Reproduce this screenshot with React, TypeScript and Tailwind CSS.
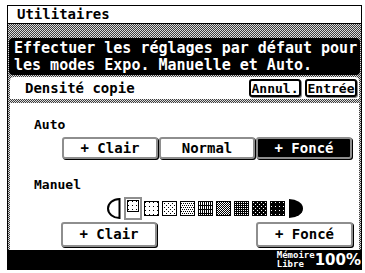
import React from "react";

// dithered gray used by the copier panel frame
const dither =
  "bg-[image:repeating-conic-gradient(#3c3c3c_0%_25%,#dcdcdc_0%_50%)] bg-[length:2px_2px]";

// --- density pattern tiles (4x4) ---
const tiles: { bg: string; fg: string; cells: [number, number][] }[] = [
  { bg: "#fff", fg: "#000", cells: [[1, 1]] },
  { bg: "#fff", fg: "#000", cells: [[0, 0], [2, 2]] },
  { bg: "#fff", fg: "#000", cells: [[0, 0], [2, 0], [1, 2], [3, 2]] },
  { bg: "#fff", fg: "#000", cells: [[0, 0], [0, 1], [0, 2], [0, 3], [2, 0], [2, 1], [2, 2], [2, 3], [1, 0], [3, 0]] },
  { bg: "#fff", fg: "#000", cells: [[0, 0], [2, 0], [1, 1], [3, 1], [0, 2], [2, 2], [1, 3], [3, 3]] },
  { bg: "#000", fg: "#fff", cells: [[1, 1], [3, 1], [1, 3], [3, 3]] },
  { bg: "#000", fg: "#fff", cells: [[1, 1], [3, 3]] },
  { bg: "#000", fg: "#fff", cells: [[1, 1]] },
];

const Swatch = ({ i, size = 15 }: { i: number; size?: number }) => {
  const t = tiles[i];
  const id = `pat-${i}-${size}`;
  return (
    <svg width={size} height={size} shapeRendering="crispEdges" className="block">
      <defs>
        <pattern id={id} width="4" height="4" patternUnits="userSpaceOnUse">
          <rect width="4" height="4" fill={t.bg} />
          {t.cells.map(([x, y], k) => (
            <rect key={k} x={x} y={y} width="1" height="1" fill={t.fg} />
          ))}
        </pattern>
      </defs>
      <rect x="0.5" y="0.5" width={size - 1} height={size - 1} fill={`url(#${id})`} stroke="#000" />
    </svg>
  );
};

const AutoBtn = ({ label, dark = false }: { label: string; dark?: boolean }) => (
  <div
    className={`w-[96px] h-[22px] rounded-[3px] border-2 border-[#8e8e8e] shadow-[1px_1px_0_#000] flex items-center justify-center text-[14px] font-bold ${
      dark ? "bg-black text-white" : "bg-white text-black"
    }`}
  >
    {label}
  </div>
);

const HeadBtn = ({ label }: { label: string }) => (
  <div className="h-[18px] w-[52px] rounded-[3px] border-2 border-black bg-white shadow-[1px_1px_0_#888] flex items-center justify-center text-[13px] leading-[13px] font-bold">
    {label}
  </div>
);

export default function App() {
  return (
    <div className="w-[365px] h-[273px] bg-white pl-[7px] pt-[5px] font-['DejaVu_Sans_Mono','Liberation_Mono',monospace] text-black">
      <div className={`w-[355px] h-[265px] border border-black flex flex-col overflow-hidden ${dither}`}>
        {/* title */}
        <div className="h-[18px] shrink-0 bg-white border-b border-black pl-[9px] text-[14px] leading-[17px] font-bold">
          Utilitaires
        </div>

        {/* message */}
        <div className="mt-[14px] mx-px h-[37px] shrink-0 rounded-[4px] bg-black text-white text-[15px] leading-[17px] font-bold pl-[5px] pt-[2px] whitespace-nowrap">
          Effectuer les réglages par défaut pour
          <br />
          les modes Expo. Manuelle et Auto.
        </div>

        {/* density header */}
        <div className="mt-[2px] mx-[2px] h-[22px] shrink-0 rounded-t-[4px] bg-white flex items-center pl-[15px] pr-[2px] text-[14px] font-bold">
          <span>Densité copie</span>
          <div className="ml-auto flex gap-[4px]">
            <HeadBtn label="Annul." />
            <HeadBtn label="Entrée" />
          </div>
        </div>

        {/* content */}
        <div className="mt-[4px] mx-[2px] flex-1 bg-white flex flex-col">
          <div className="pl-[24px] pt-[15px] text-[13px] leading-[14px] font-bold">Auto</div>
          <div className="mt-[5px] ml-[52px] flex gap-px">
            <AutoBtn label="+ Clair" />
            <AutoBtn label="Normal" />
            <AutoBtn label="+ Foncé" dark />
          </div>

          <div className="mt-[19px] pl-[24px] text-[13px] leading-[14px] font-bold">Manuel</div>

          {/* density scale */}
          <div className="mt-[5px] ml-[97px] h-[23px] flex items-center">
            <svg width="14" height="21" className="block">
              <path d="M12.5 1 A 11.5 9.5 0 0 0 12.5 20 Z" fill="#fff" stroke="#000" strokeWidth="2" />
            </svg>
            <div className="ml-[3px] w-[18px] h-[23px] border-2 border-[#8e8e8e] bg-white p-px">
              <Swatch i={0} size={12} />
            </div>
            <div className="ml-[2px] flex gap-[3px]">
              {[0, 1, 2, 3, 4, 5, 6, 7].map((i) => (
                <Swatch key={i} i={i} />
              ))}
            </div>
            <svg width="16" height="21" className="block ml-[3px]">
              <path d="M1 1 A 14 9.5 0 0 1 1 20 Z" fill="#000" />
            </svg>
          </div>

          <div className="mt-[2px] flex justify-between pl-[51px] pr-[6px]">
            <div className="w-[96px] h-[25px] rounded-[3px] border-2 border-[#8e8e8e] shadow-[1px_1px_0_#000] bg-white flex items-center justify-center text-[14px] font-bold">
              + Clair
            </div>
            <div className="w-[97px] h-[25px] rounded-[3px] border-2 border-[#8e8e8e] shadow-[1px_1px_0_#000] bg-white flex items-center justify-center text-[14px] font-bold">
              + Foncé
            </div>
          </div>
        </div>

        {/* status bar */}
        <div className="h-[19px] shrink-0 bg-black text-white flex justify-end items-start">
          <div className="mt-[1px] text-[9px] leading-[9px] font-bold">
            Mémoire
            <br />
            Libre
          </div>
          <div className="mt-[2px] font-['DejaVu_Sans',sans-serif] text-[15px] leading-[16px] font-bold">100%</div>
        </div>
      </div>
    </div>
  );
}
